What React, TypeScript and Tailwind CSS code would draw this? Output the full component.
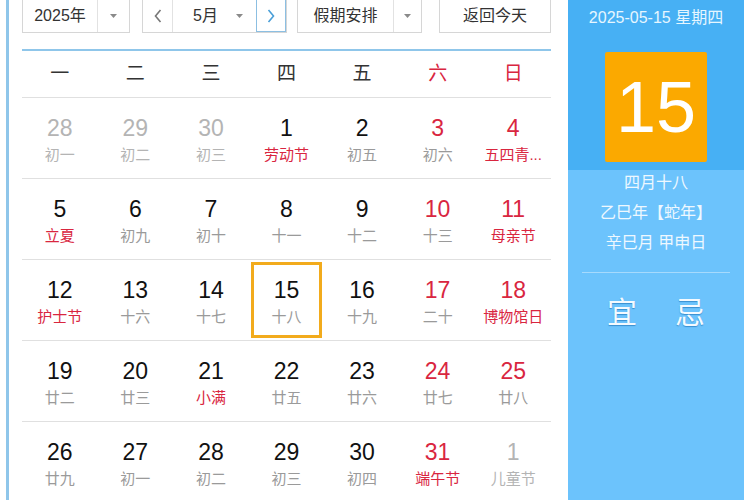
import React from 'react'

type Cell = { d: number; l: string; dim?: boolean; red?: boolean; lred?: boolean; sel?: boolean }

const WEEK = ['一', '二', '三', '四', '五', '六', '日']

const ROWS: Cell[][] = [
  [
    { d: 28, l: '初一', dim: true },
    { d: 29, l: '初二', dim: true },
    { d: 30, l: '初三', dim: true },
    { d: 1, l: '劳动节', lred: true },
    { d: 2, l: '初五' },
    { d: 3, l: '初六', red: true },
    { d: 4, l: '五四青...', red: true, lred: true }
  ],
  [
    { d: 5, l: '立夏', lred: true },
    { d: 6, l: '初九' },
    { d: 7, l: '初十' },
    { d: 8, l: '十一' },
    { d: 9, l: '十二' },
    { d: 10, l: '十三', red: true },
    { d: 11, l: '母亲节', red: true, lred: true }
  ],
  [
    { d: 12, l: '护士节', lred: true },
    { d: 13, l: '十六' },
    { d: 14, l: '十七' },
    { d: 15, l: '十八', sel: true },
    { d: 16, l: '十九' },
    { d: 17, l: '二十', red: true },
    { d: 18, l: '博物馆日', red: true, lred: true }
  ],
  [
    { d: 19, l: '廿二' },
    { d: 20, l: '廿三' },
    { d: 21, l: '小满', lred: true },
    { d: 22, l: '廿五' },
    { d: 23, l: '廿六' },
    { d: 24, l: '廿七', red: true },
    { d: 25, l: '廿八', red: true }
  ],
  [
    { d: 26, l: '廿九' },
    { d: 27, l: '初一' },
    { d: 28, l: '初二' },
    { d: 29, l: '初三' },
    { d: 30, l: '初四' },
    { d: 31, l: '端午节', red: true, lred: true },
    { d: 1, l: '儿童节', dim: true }
  ]
]

function Caret() {
  return (
    <svg width="9" height="6" viewBox="0 0 9 6">
      <path d="M1 1h7L4.5 5z" fill="#8a8a8a" />
    </svg>
  )
}

function Chevron({ dir, color }: { dir: 'l' | 'r'; color: string }) {
  return (
    <svg width="10" height="16" viewBox="0 0 10 16">
      <path
        d={dir === 'l' ? 'M7.5 2L2.5 8l5 6' : 'M2.5 2l5 6-5 6'}
        fill="none"
        stroke={color}
        strokeWidth="1.6"
      />
    </svg>
  )
}

function DayCell({ c }: { c: Cell }) {
  const num = c.dim ? 'text-[#b4b4b4]' : c.red ? 'text-[#d9263f]' : 'text-[#111]'
  const lun = c.dim ? 'text-[#b4b4b4]' : c.lred ? 'text-[#d9263f]' : 'text-[#9a9a9a]'
  return (
    <div className="relative flex flex-col items-center pt-[16px]">
      {c.sel && <div className="absolute inset-x-[2px] inset-y-[2px] border-[3px] border-[#f2ab1c]" />}
      <div className={`text-[23px] leading-[28px] ${num}`} style={{ fontFamily: '"Liberation Sans", Arial, sans-serif' }}>
        {c.d}
      </div>
      <div className={`mt-[2px] whitespace-nowrap text-[15px] leading-[22px] ${lun}`}>{c.l}</div>
    </div>
  )
}

export default function App() {
  return (
    <div
      className="relative flex h-[500px] w-[750px] overflow-hidden bg-white"
      style={{ fontFamily: '"Liberation Sans", "Noto Sans CJK SC", sans-serif' }}
    >
      <div className="ml-[6px] h-full w-[3px] bg-[#8fc6ea]" />

      <div className="ml-[13px] w-[529px]">
        {/* controls */}
        <div className="flex h-[33px] text-[16px] text-[#333]">
          <div className="flex w-[108px] border-x border-b border-[#d6d6d6]">
            <div className="flex w-[75px] items-center justify-center border-r border-[#e2e2e2]">2025年</div>
            <div className="flex flex-1 items-center justify-center">
              <Caret />
            </div>
          </div>
          <div className="ml-[12px] flex w-[145px] border-x border-b border-[#d6d6d6]">
            <div className="flex w-[30px] items-center justify-center border-r border-[#e2e2e2]">
              <Chevron dir="l" color="#777" />
            </div>
            <div className="flex w-[83px] items-center pl-[20px]">
              <span>5月</span>
              <span className="ml-auto mr-[12px] flex">
                <Caret />
              </span>
            </div>
            <div className="flex flex-1 items-center justify-center border border-t-0 border-[#8cbfe2]">
              <Chevron dir="r" color="#4a9fd8" />
            </div>
          </div>
          <div className="ml-[10px] flex w-[125px] border-x border-b border-[#d6d6d6]">
            <div className="flex w-[96px] items-center justify-center border-r border-[#e2e2e2]">假期安排</div>
            <div className="flex flex-1 items-center justify-center">
              <Caret />
            </div>
          </div>
          <div className="ml-[17px] flex w-[112px] items-center justify-center border-x border-b border-[#d6d6d6]">
            返回今天
          </div>
        </div>

        <div className="mt-[16px] h-[2px] bg-[#8fc6ea]" />

        {/* week header */}
        <div className="grid h-[47px] grid-cols-7 border-b border-[#e0e0e0] text-[19px]">
          {WEEK.map((w, i) => (
            <div key={w} className={`flex items-center justify-center ${i > 4 ? 'text-[#d9263f]' : 'text-[#333]'}`}>
              {w}
            </div>
          ))}
        </div>

        {ROWS.map((r, i) => (
          <div key={i} className="grid h-[81px] grid-cols-7 border-b border-[#e0e0e0]">
            {r.map((c, j) => (
              <DayCell key={j} c={c} />
            ))}
          </div>
        ))}
      </div>

      {/* right panel */}
      <div className="ml-[17px] flex h-full w-[176px] flex-col bg-[#6cc3fc]">
        <div className="flex h-[170px] flex-col items-center bg-[#47b0f4]">
          <div className="mt-[7px] text-[16px] leading-[22px] text-[#e6f6ff]">2025-05-15 星期四</div>
          <div className="mt-[23px] flex h-[110px] w-[102px] items-center justify-center rounded-[2px] bg-[#fba900]">
            <span className="text-[72px] leading-none text-white" style={{ fontFamily: '"Liberation Sans", Arial, sans-serif' }}>
              15
            </span>
          </div>
        </div>
        <div className="flex flex-col items-center text-[16px] leading-[30px] text-[#eef8ff]">
          <div className="mt-[-2px]">四月十八</div>
          <div>乙巳年【蛇年】</div>
          <div>辛巳月 甲申日</div>
        </div>
        <div className="mx-[14px] mt-[14px] h-px bg-[#a6dafd]" />
        <div className="mt-[22px] flex justify-center gap-[38px] text-[30px] leading-[36px] text-[#f4faff]" style={{ textShadow: '0 1px 1px #3a8fd0' }}>
          <span>宜</span>
          <span>忌</span>
        </div>
      </div>
    </div>
  )
}
